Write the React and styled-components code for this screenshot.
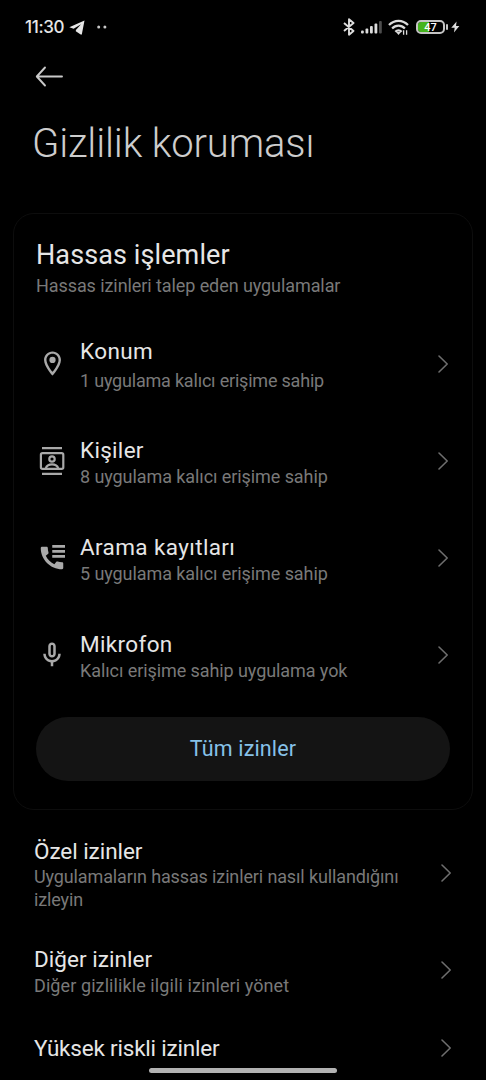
import React from 'react';
import styled, { createGlobalStyle } from 'styled-components';

const GlobalStyle = createGlobalStyle`
  * { box-sizing: border-box; }
  body { margin: 0; background: #000; }
`;

const Screen = styled.div`
  position: relative;
  width: 486px;
  height: 1080px;
  overflow: hidden;
  background: #000;
  color: #e6e6e6;
  font-family: Roboto, "Liberation Sans", sans-serif;
`;

const StatusBar = styled.header`
  display: flex;
  align-items: center;
  height: 54px;
  padding: 0 26px 0 25px;
`;

const Clock = styled.span`
  font-family: Inter, sans-serif;
  font-size: 17px;
  font-weight: 500;
  letter-spacing: -0.35px;
  line-height: 20px;
  width: 44px;
`;

const StatusIcons = styled.div`
  display: flex;
  align-items: center;
  margin-left: auto;
`;

const Glyph = styled.svg`
  display: block;
  flex: none;
  margin-left: ${(p) => p.$gap || 0}px;
`;

const Battery = styled.div`
  display: flex;
  align-items: center;
  justify-content: center;
  width: 29px;
  height: 14px;
  margin-left: 7px;
  padding-top: 1px;
  border: 2px solid #c4c4c4;
  border-radius: 5px;
  background: linear-gradient(90deg, #45b41c 0 11px, #000 11px);
  background-clip: padding-box;
  color: #fff;
  font-size: 11px;
  font-weight: 500;
  line-height: 10px;
`;

const BackButton = styled.button`
  display: block;
  margin: 10px 0 0 34px;
  padding: 0;
  border: 0;
  background: none;
`;

const PageTitle = styled.h1`
  margin: 31px 0 0 32px;
  font-size: 40px;
  font-weight: 300;
  letter-spacing: -0.15px;
  line-height: 50px;
  color: #cdcdcd;
`;

const Card = styled.section`
  width: 460px;
  height: 597px;
  margin: 44px 0 3px 13px;
  padding: 25px 22px 0;
  border: 1px solid #0d0d0d;
  border-radius: 21px;
`;

const CardTitle = styled.h2`
  margin: 0;
  font-size: 27px;
  font-weight: 450;
  letter-spacing: 0.1px;
  line-height: 33px;
`;

const Title = styled.div`
  font-size: 22.5px;
  font-weight: 450;
  letter-spacing: ${(p) => p.$track || 0}px;
  line-height: 27px;
`;

const Summary = styled.div`
  margin-top: ${(p) => p.$gap || 0}px;
  font-size: 18px;
  letter-spacing: ${(p) => p.$track || 0}px;
  line-height: 23px;
  color: #797979;
`;

const PermissionRow = styled.div`
  display: flex;
  align-items: center;
  height: 97px;
`;

const PermissionList = styled.div`
  margin-top: 18px;
`;

const IconSlot = styled.div`
  display: flex;
  justify-content: center;
  width: 32px;
  margin-right: 12px;
  color: #a9a9a9;
`;

const Label = styled.div`
  flex: 1;
  padding-top: ${(p) => p.$shift || 0}px;
`;

const AllButton = styled.button`
  display: block;
  width: 414px;
  height: 64px;
  margin-top: 14px;
  padding: 0;
  border: 0;
  border-radius: 32px;
  background: #141414;
  color: #86c1e8;
  font: 400 21.5px/64px Roboto, sans-serif;
  letter-spacing: 0.15px;
`;

const SettingRow = styled.div`
  display: flex;
  align-items: center;
  height: ${(p) => p.$height}px;
  padding: 0 33px 0 34px;
`;

const HomeIndicator = styled.div`
  position: absolute;
  left: 149px;
  bottom: 7px;
  width: 188px;
  height: 5px;
  border-radius: 3px;
  background: #b2b2b2;
`;

const Chevron = () => (
  <Glyph width="14" height="20" viewBox="0 0 14 20" fill="none" stroke="#6e6e6e" strokeWidth="1.6" strokeLinecap="round" strokeLinejoin="round">
    <path d="M3 2l8.200 8L3 18" />
  </Glyph>
);

const PinIcon = () => (
  <Glyph width="29" height="29" viewBox="0 0 24 24" fill="currentColor">
    <path d="M12 2C8.13 2 5 5.13 5 9c0 5.25 7 13 7 13s7-7.75 7-13c0-3.87-3.13-7-7-7zM7 9c0-2.76 2.24-5 5-5s5 2.24 5 5c0 2.88-2.88 7.19-5 9.88C9.92 16.21 7 11.85 7 9z" />
    <circle cx="12" cy="9" r="2.6" />
  </Glyph>
);

const ContactsIcon = () => (
  <Glyph width="30" height="30" viewBox="0 0 30 30" fill="none" stroke="currentColor" strokeWidth="2.2">
    <path d="M5 2.2h20M5 27.8h20" />
    <rect x="3.9" y="7.1" width="22.4" height="15.8" rx="1.6" />
    <circle cx="15" cy="13" r="2.7" />
    <path d="M8.800 22.200c1-3 3.400-3.900 6.200-3.900s5.200.9 6.200 3.900" />
  </Glyph>
);

const CallLogIcon = () => (
  <Glyph width="30" height="30" viewBox="0 0 24 24" fill="currentColor">
    <path d="M20.01 15.38c-1.23 0-2.42-.2-3.53-.56-.35-.12-.74-.03-1.01.24l-1.57 1.97c-2.83-1.35-5.48-3.9-6.89-6.83l1.95-1.66c.27-.28.35-.67.24-1.02-.37-1.11-.56-2.3-.56-3.53 0-.54-.45-.99-.99-.99H4.19C3.65 3 3 3.24 3 3.99 3 13.28 10.73 21 20.01 21c.71 0 .99-.63.99-1.18v-3.45c0-.54-.45-.99-.99-.99z" />
    <path d="M12.200 1.600h10.200v2.100H12.200zM12.200 5.600h10.200v2.100H12.200zM12.200 9.600h10.200v2.100H12.200z" />
  </Glyph>
);

const MicIcon = () => (
  <Glyph width="30" height="30" viewBox="0 0 24 24" fill="currentColor">
    <path d="M12 14c1.66 0 3-1.34 3-3V5c0-1.66-1.34-3-3-3S9 3.34 9 5v6c0 1.66 1.34 3 3 3zm-1-9c0-.55.45-1 1-1s1 .45 1 1v6c0 .55-.45 1-1 1s-1-.45-1-1V5zm6 6c0 2.76-2.24 5-5 5s-5-2.24-5-5H5c0 3.53 2.61 6.43 6 6.92V21h2v-3.08c3.39-.49 6-3.39 6-6.92h-2z" />
  </Glyph>
);

const permissions = [
  { icon: <PinIcon />, title: 'Konum', track: 0.4, summary: '1 uygulama kalıcı erişime sahip', summaryTrack: -0.2, gap: 4, shift: 3 },
  { icon: <ContactsIcon />, title: 'Kişiler', track: 0.3, summary: '8 uygulama kalıcı erişime sahip', summaryTrack: -0.08, gap: 1, shift: 4 },
  { icon: <CallLogIcon />, title: 'Arama kayıtları', track: 0.38, summary: '5 uygulama kalıcı erişime sahip', summaryTrack: -0.08, gap: 1, shift: 4 },
  { icon: <MicIcon />, title: 'Mikrofon', track: 0.35, summary: 'Kalıcı erişime sahip uygulama yok', summaryTrack: -0.08, gap: 1, shift: 4 },
];

const settings = [
  { title: 'Özel izinler', track: -0.05, summary: 'Uygulamaların hassas izinleri nasıl kullandığını izleyin', summaryTrack: -0.13, height: 120, shift: 3 },
  { title: 'Diğer izinler', track: 0.05, summary: 'Diğer gizlilikle ilgili izinleri yönet', summaryTrack: 0.09, gap: 1, height: 74, shift: 3 },
  { title: 'Yüksek riskli izinler', track: -0.2, height: 82, shift: 1 },
];

export default function App() {
  return (
    <Screen>
      <GlobalStyle />
      <StatusBar>
        <Clock>11:30</Clock>
        <Glyph width="16" height="15" viewBox="0 0 16 15" fill="#e6e6e6">
          <path d="M15.500.5L.3 7.200l4.300 1.600L12 4.200 6.900 9.900l-.1 1.300 4.900 3.300c.6.300 1 .1 1.200-.6z" />
        </Glyph>
        <Glyph $gap={12} width="10" height="4" viewBox="0 0 10 4" fill="#c8c8c8">
          <circle cx="1.700" cy="2" r="1.500" />
          <circle cx="7.900" cy="2" r="1.500" />
        </Glyph>
        <StatusIcons>
          <Glyph width="12" height="18" viewBox="0 0 12 18" fill="none" stroke="#dcdcdc" strokeWidth="1.900" strokeLinejoin="round">
            <path d="M1 4.900l9.500 8L6 16.700V1.300l4.500 3.800L1 13.100" />
          </Glyph>
          <Glyph $gap={6} width="21" height="14" viewBox="0 0 21 14" fill="#dcdcdc">
            <rect x="0" y="10.500" width="2.800" height="3" rx="1" />
            <rect x="4.500" y="8.500" width="2.800" height="5" rx="1" />
            <rect x="9" y="6" width="2.800" height="7.500" rx="1" />
            <rect x="13.500" y="3.500" width="2.800" height="10" rx="1" />
            <rect x="18" y="1" width="2.800" height="12.500" rx="1" fill="#4d4d4d" />
          </Glyph>
          <Glyph $gap={6} width="21" height="17" viewBox="0 0 21 17" fill="none" stroke="#dcdcdc" strokeWidth="2.200">
            <path d="M1 6.100C6.300.4 14.700.4 20 6.100M4.100 9.500c3.700-3.900 9.100-3.900 12.800 0M7.300 12.700c1.900-1.900 4.500-1.900 6.400 0" />
            <path d="M8 13l2.500 3 2.500-3z" fill="#dcdcdc" stroke="none" />
            <path d="M15.600 11.200v4.600M18.600 11.200v4.600" strokeWidth="1.300" />
          </Glyph>
          <Battery>47</Battery>
          <Glyph $gap={1} width="2" height="6" viewBox="0 0 2 6" fill="#c4c4c4">
            <rect width="2" height="6" rx="1" />
          </Glyph>
          <Glyph $gap={3} width="9" height="12" viewBox="0 0 10 12" fill="#dcdcdc">
            <path d="M6.200 0L.3 6.900h3.800L3.300 12l6-7H5.600z" />
          </Glyph>
        </StatusIcons>
      </StatusBar>
      <BackButton aria-label="Geri">
        <Glyph width="30" height="24" viewBox="0 0 30 24" fill="none" stroke="#c9c9c9" strokeWidth="1.900" strokeLinecap="round" strokeLinejoin="round">
          <path d="M11 3.500L2.800 12.500l8.200 9M3 12.500h25" />
        </Glyph>
      </BackButton>
      <PageTitle>Gizlilik koruması</PageTitle>
      <Card>
        <CardTitle>Hassas işlemler</CardTitle>
        <Summary $gap={2} $track={-0.08}>Hassas izinleri talep eden uygulamalar</Summary>
        <PermissionList>
          {permissions.map((item) => (
            <PermissionRow key={item.title}>
              <IconSlot>{item.icon}</IconSlot>
              <Label $shift={item.shift}>
                <Title $track={item.track}>{item.title}</Title>
                <Summary $gap={item.gap} $track={item.summaryTrack}>{item.summary}</Summary>
              </Label>
              <Chevron />
            </PermissionRow>
          ))}
        </PermissionList>
        <AllButton>Tüm izinler</AllButton>
      </Card>
      {settings.map((item) => (
        <SettingRow key={item.title} $height={item.height}>
          <Label $shift={item.shift}>
            <Title $track={item.track}>{item.title}</Title>
            {item.summary && <Summary $gap={item.gap} $track={item.summaryTrack}>{item.summary}</Summary>}
          </Label>
          <Chevron />
        </SettingRow>
      ))}
      <HomeIndicator />
    </Screen>
  );
}
